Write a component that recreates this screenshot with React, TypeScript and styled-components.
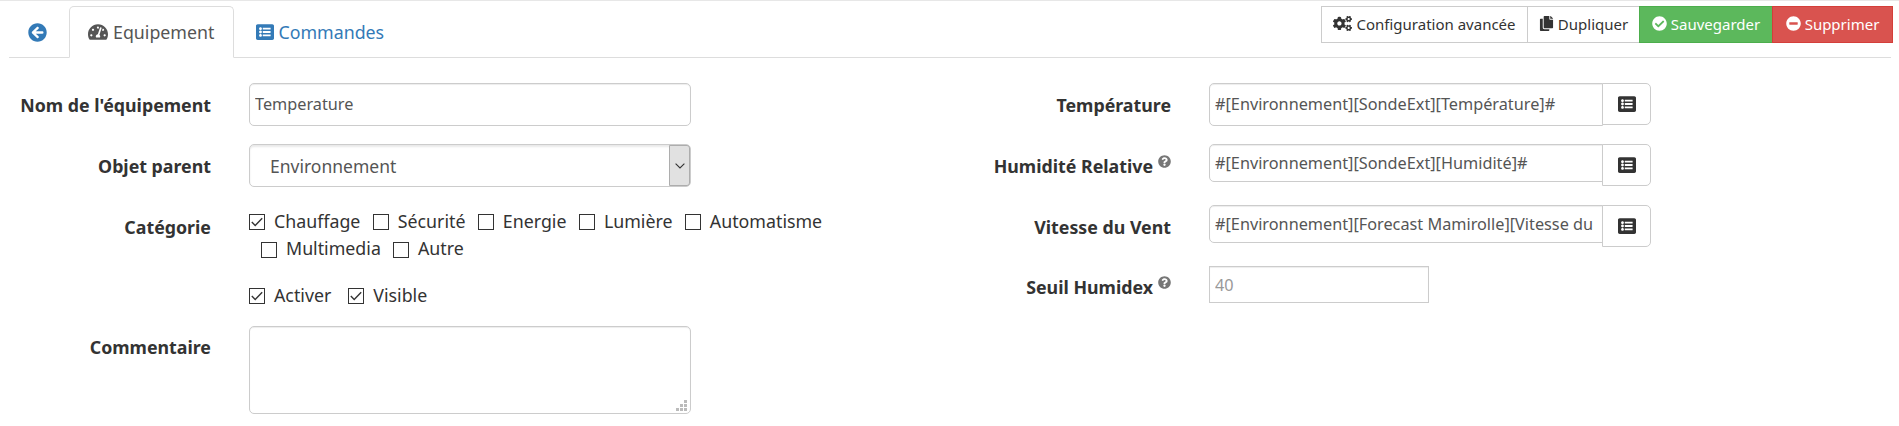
import React from "react";
import styled, { createGlobalStyle, css } from "styled-components";
import {
  FaArrowCircleLeft,
  FaTachometerAlt,
  FaListAlt,
  FaCogs,
  FaCopy,
  FaCheckCircle,
  FaMinusCircle,
  FaQuestionCircle,
} from "react-icons/fa";

const GlobalStyle = createGlobalStyle`
  *, *::before, *::after { box-sizing: border-box; }
  body {
    margin: 0;
    background: #fff;
    color: #333;
    font-family: "Noto Sans", sans-serif;
    font-size: 17.8px;
    line-height: 26px;
  }
  input, textarea, button { font-family: inherit; margin: 0; }
  svg { flex: none; display: block; }
`;

const Page = styled.div`
  height: 426px;
  border-top: 1px solid #e7e7e7;
  overflow: hidden;
`;

const Header = styled.header`
  display: flex;
  align-items: flex-start;
  justify-content: space-between;
  height: 57px;
  margin: 0 8px 0 9px;
  padding-top: 5px;
  border-bottom: 1px solid #ddd;
`;

const Tabs = styled.nav`
  display: flex;
  gap: 3px;
  height: 52px;
`;

const Tab = styled.a<{ $active?: boolean }>`
  display: flex;
  align-items: center;
  gap: 4px;
  height: 52px;
  padding: 0 18px;
  border: 1px solid transparent;
  border-radius: 5px 5px 0 0;
  color: #337ab7;
  white-space: nowrap;
  ${(p) =>
    p.$active &&
    css`
      gap: 5px;
      padding-right: 19px;
      color: #555;
      background: #fff;
      border-color: #ddd #ddd #fff;
    `}
`;

const Actions = styled.div`
  display: flex;
  margin-right: -2px;
`;

const tones = {
  plain: ["#fff", "#ccc", "#333"],
  success: ["#5cb85c", "#4cae4c", "#fff"],
  danger: ["#d9534f", "#d43f3a", "#fff"],
};

const ActionButton = styled.button<{ $tone: keyof typeof tones; $width: number }>`
  display: flex;
  align-items: center;
  justify-content: center;
  gap: 4px;
  width: ${(p) => p.$width}px;
  height: 37px;
  margin-left: -1px;
  padding: 0 0 2px;
  border: 1px solid ${(p) => tones[p.$tone][1]};
  background: ${(p) => tones[p.$tone][0]};
  color: ${(p) => tones[p.$tone][2]};
  font-size: 15px;
  line-height: 24px;
  white-space: nowrap;
`;

const Form = styled.form`
  display: grid;
  grid-template-columns: 960px 1fr;
  padding-top: 25px;
`;

const Column = styled.div``;

const Group = styled.div<{ $height?: number }>`
  display: flex;
  align-items: flex-start;
  height: ${(p) => p.$height ?? 61}px;
`;

const Label = styled.label<{ $top?: number }>`
  display: flex;
  justify-content: flex-end;
  flex: none;
  width: 211px;
  margin-right: 38px;
  padding-top: ${(p) => p.$top ?? 9}px;
  font-weight: 700;
  white-space: nowrap;
`;

const Help = styled.sup`
  margin: 2px 0 0 5px;
  color: #777;
  line-height: 0;
`;

const field = css`
  border: 1px solid #ccc;
  background: #fff;
  box-shadow: inset 0 1px 1px rgba(0, 0, 0, 0.075);
  color: #555;
  outline: none;
`;

const TextInput = styled.input<{ $width: number; $height: number; $radius: string }>`
  ${field}
  width: ${(p) => p.$width}px;
  height: ${(p) => p.$height}px;
  padding: 0 8px ${(p) => (p.$height > 40 ? 2 : 0)}px 5px;
  border-radius: ${(p) => p.$radius};
  font-size: 16.25px;
  &::placeholder { color: #999; opacity: 1; }
`;

const Select = styled.div`
  ${field}
  display: flex;
  align-items: stretch;
  justify-content: space-between;
  width: 442px;
  height: 43px;
  padding-left: 20px;
  border-radius: 5px;
  font-size: 17.5px;
  line-height: 42px;
  box-shadow: inset 0 2px 2px rgba(0, 0, 0, 0.09);
`;

const SelectArrow = styled.span`
  display: flex;
  align-items: center;
  justify-content: center;
  width: 21px;
  border: 1px solid #adadad;
  border-radius: 0 3px 3px 0;
  background: #e1e1e1;
`;

const PickButton = styled.button`
  display: flex;
  align-items: center;
  justify-content: center;
  width: 49px;
  height: 42px;
  margin-left: -1px;
  padding: 0;
  border: 1px solid #ccc;
  border-radius: 0 5px 5px 0;
  background: #fff;
  color: #333;
`;

const OptionRows = styled.div`
  padding-top: 3px;
`;

const Box = styled.span`
  display: flex;
  align-items: center;
  justify-content: center;
  width: 16px;
  height: 16px;
  margin: 6px 9px 0 0;
  border: 1px solid #333;
  background: #fff;
`;

const Options = styled.div<{ $gap: number; $wrapped?: boolean }>`
  display: flex;
  gap: ${(p) => p.$gap}px;
  height: 27px;
  ${(p) =>
    p.$wrapped &&
    css`
      padding-left: 12px;
      ${Box} { margin-top: 7px; }
    `}
`;

const Option = styled.label`
  display: flex;
  align-items: flex-start;
  white-space: nowrap;
`;

const CommentField = styled.div`
  position: relative;
  width: 442px;
  height: 88px;
`;

const TextArea = styled.textarea`
  ${field}
  display: block;
  width: 442px;
  height: 88px;
  border-radius: 5px;
  resize: none;
`;

const Grip = styled.svg`
  position: absolute;
  right: 4px;
  bottom: 3px;
`;

function Check({ label, checked }: { label: string; checked?: boolean }) {
  return (
    <Option>
      <Box>
        {checked && (
          <svg width="12" height="10" viewBox="0 0 12 10" fill="none" stroke="#333" strokeWidth="1.4">
            <path d="M0.8 5 4.2 8.4 11.2 1.2" />
          </svg>
        )}
      </Box>
      {label}
    </Option>
  );
}

function CommandField({ value, height }: { value: string; height: number }) {
  return (
    <>
      <TextInput $width={394} $height={height} $radius="5px 0 0 5px" defaultValue={value} />
      <PickButton type="button">
        <FaListAlt size={18} />
      </PickButton>
    </>
  );
}

export default function App() {
  return (
    <Page>
      <GlobalStyle />
      <Header>
        <Tabs>
          <Tab><FaArrowCircleLeft size={19} /></Tab>
          <Tab $active><FaTachometerAlt size={20} />Equipement</Tab>
          <Tab><FaListAlt size={18} />Commandes</Tab>
        </Tabs>
        <Actions>
          <ActionButton $tone="plain" $width={207}><FaCogs size={19} />Configuration avancée</ActionButton>
          <ActionButton $tone="plain" $width={113}><FaCopy size={15} />Dupliquer</ActionButton>
          <ActionButton $tone="success" $width={134}><FaCheckCircle size={15} />Sauvegarder</ActionButton>
          <ActionButton $tone="danger" $width={121}><FaMinusCircle size={15} />Supprimer</ActionButton>
        </Actions>
      </Header>
      <Form>
        <Column>
          <Group>
            <Label>Nom de l'équipement</Label>
            <TextInput $width={442} $height={43} $radius="5px" defaultValue="Temperature" />
          </Group>
          <Group>
            <Label>Objet parent</Label>
            <Select>
              Environnement
              <SelectArrow>
                <svg width="10" height="6" viewBox="0 0 10 6" fill="none" stroke="#333" strokeWidth="1.1">
                  <path d="M0.6 0.6 5 5 9.4 0.6" />
                </svg>
              </SelectArrow>
            </Select>
          </Group>
          <Group $height={77}>
            <Label>Catégorie</Label>
            <OptionRows>
              <Options $gap={12.4}>
                <Check label="Chauffage" checked />
                <Check label="Sécurité" />
                <Check label="Energie" />
                <Check label="Lumière" />
                <Check label="Automatisme" />
              </Options>
              <Options $gap={12} $wrapped>
                <Check label="Multimedia" />
                <Check label="Autre" />
              </Options>
            </OptionRows>
          </Group>
          <Group $height={44}>
            <Label />
            <Options $gap={17}>
              <Check label="Activer" checked />
              <Check label="Visible" checked />
            </Options>
          </Group>
          <Group>
            <Label $top={8}>Commentaire</Label>
            <CommentField>
              <TextArea />
              <Grip width="11" height="11" viewBox="0 0 11 11" fill="#bbb">
                <path d="M8 0h3v3H8zM4 4h3v3H4zM8 4h3v3H8zM0 8h3v3H0zM4 8h3v3H4zM8 8h3v3H8z" />
              </Grip>
            </CommentField>
          </Group>
        </Column>
        <Column>
          <Group>
            <Label>Température</Label>
            <CommandField value="#[Environnement][SondeExt][Température]#" height={43} />
          </Group>
          <Group>
            <Label>Humidité Relative<Help><FaQuestionCircle size={13} /></Help></Label>
            <CommandField value="#[Environnement][SondeExt][Humidité]#" height={38} />
          </Group>
          <Group>
            <Label>Vitesse du Vent</Label>
            <CommandField value="#[Environnement][Forecast Mamirolle][Vitesse du" height={38} />
          </Group>
          <Group>
            <Label $top={8}>Seuil Humidex<Help><FaQuestionCircle size={13} /></Help></Label>
            <TextInput $width={220} $height={37} $radius="0" placeholder="40" />
          </Group>
        </Column>
      </Form>
    </Page>
  );
}
